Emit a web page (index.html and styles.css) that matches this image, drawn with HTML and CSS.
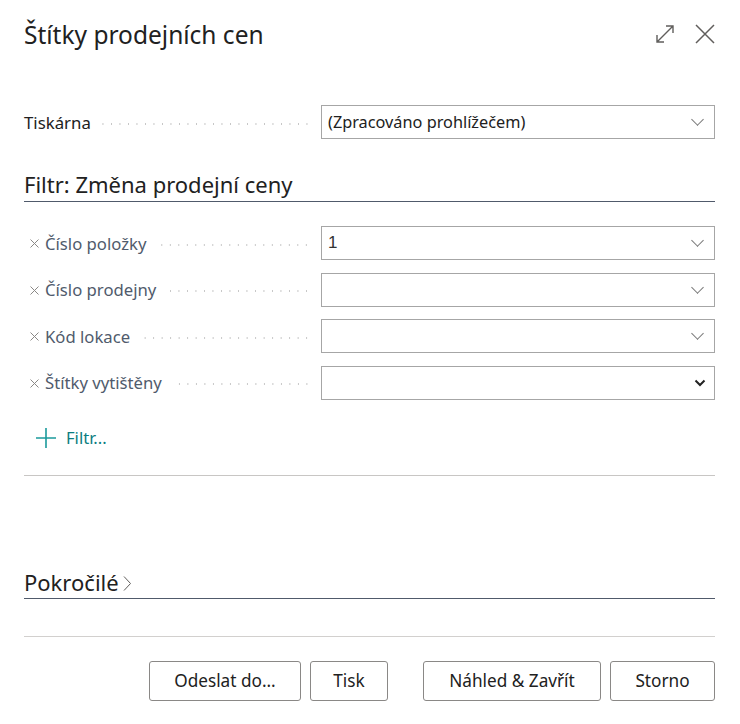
FILE: index.html
```html
<!DOCTYPE html>
<html lang="cs">
<head>
<meta charset="utf-8">
<title>Štítky prodejních cen</title>
<link rel="stylesheet" href="styles.css">
</head>
<body>
<div class="dialog">
  <header class="head">
    <h1 class="title">Štítky prodejních cen</h1>
    <div class="head-icons">
      <svg class="ico" width="22" height="22" viewBox="0 0 22 22" aria-hidden="true">
        <path d="M3 19 L19 3 M12 3 H19 V10 M3 12 V19 H10" fill="none" stroke="#605e5c" stroke-width="1.4"/>
      </svg>
      <svg class="ico" width="22" height="22" viewBox="0 0 22 22" aria-hidden="true">
        <path d="M2 2 L20 20 M20 2 L2 20" fill="none" stroke="#605e5c" stroke-width="1.5"/>
      </svg>
    </div>
  </header>

  <div class="field printer">
    <div class="label"><span class="ltext strong">Tiskárna</span><span class="dots"></span></div>
    <div class="box"><span class="val">(Zpracováno prohlížečem)</span><span class="chev"></span></div>
  </div>

  <h2 class="section">Filtr: Změna prodejní ceny</h2>

  <div class="filters">
    <div class="field">
      <div class="label"><svg class="x" width="9" height="9" viewBox="0 0 9 9" aria-hidden="true"><path d="M0.5 0.5 L8.5 8.5 M8.5 0.5 L0.5 8.5" stroke="#8a8886" stroke-width="1"/></svg><span class="ltext">Číslo položky</span><span class="dots"></span></div>
      <div class="box"><span class="val num">1</span><span class="chev"></span></div>
    </div>
    <div class="field">
      <div class="label"><svg class="x" width="9" height="9" viewBox="0 0 9 9" aria-hidden="true"><path d="M0.5 0.5 L8.5 8.5 M8.5 0.5 L0.5 8.5" stroke="#8a8886" stroke-width="1"/></svg><span class="ltext">Číslo prodejny</span><span class="dots"></span></div>
      <div class="box"><span class="val"></span><span class="chev"></span></div>
    </div>
    <div class="field">
      <div class="label"><svg class="x" width="9" height="9" viewBox="0 0 9 9" aria-hidden="true"><path d="M0.5 0.5 L8.5 8.5 M8.5 0.5 L0.5 8.5" stroke="#8a8886" stroke-width="1"/></svg><span class="ltext">Kód lokace</span><span class="dots"></span></div>
      <div class="box"><span class="val"></span><span class="chev"></span></div>
    </div>
    <div class="field">
      <div class="label"><svg class="x" width="9" height="9" viewBox="0 0 9 9" aria-hidden="true"><path d="M0.5 0.5 L8.5 8.5 M8.5 0.5 L0.5 8.5" stroke="#8a8886" stroke-width="1"/></svg><span class="ltext">Štítky vytištěny</span><span class="dots"></span></div>
      <div class="box"><span class="val"></span>
        <svg class="chev-bold" width="12" height="8" viewBox="0 0 12 8" aria-hidden="true"><path d="M1.5 1.5 L6 6 L10.5 1.5" fill="none" stroke="#222" stroke-width="2"/></svg>
      </div>
    </div>
  </div>

  <div class="addfilter">
    <svg width="22" height="22" viewBox="0 0 22 22" aria-hidden="true"><path d="M11 1 V21 M1 11 H21" stroke="#1b9a9c" stroke-width="1.6"/></svg>
    <span>Filtr...</span>
  </div>

  <div class="rule light"></div>

  <h2 class="section adv">Pokročilé<svg class="adv-chev" width="10" height="18" viewBox="0 0 10 18" aria-hidden="true"><path d="M2 2.5 L8.5 9.5 L2 16.5" fill="none" stroke="#605e5c" stroke-width="1"/></svg></h2>

  <div class="rule light foot-rule"></div>

  <div class="actions">
    <button class="btn w-send">Odeslat do...</button>
    <button class="btn w-print">Tisk</button>
    <button class="btn w-prev">Náhled &amp; Zavřít</button>
    <button class="btn w-cancel">Storno</button>
  </div>
</div>
</body>
</html>
```

FILE: styles.css
```css
* { box-sizing: border-box; }
html, body { margin: 0; padding: 0; background: #fff; }
body {
  width: 740px;
  height: 724px;
  overflow: hidden;
  font-family: "Noto Sans", "Open Sans", "Liberation Sans", sans-serif;
  color: #212121;
}
.dialog {
  padding: 0 25px 0 24px;
}
.head {
  display: flex;
  align-items: center;
  justify-content: space-between;
  height: 66px;
  padding-top: 2px;
}
.title {
  margin: 0;
  font-size: 24.5px;
  font-weight: 400;
  color: #212121;
}
.head-icons {
  display: flex;
  gap: 18px;
  align-items: center;
  margin-right: -1px;
}
.ico { display: block; }

.field {
  display: grid;
  grid-template-columns: 297px 1fr;
  height: 34px;
  align-items: center;
}
.printer { margin-top: 39px; }
.label {
  display: flex;
  align-items: center;
  height: 100%;
  padding-right: 10px;
}
.ltext {
  font-size: 16.7px;
  color: #505b6c;
  white-space: nowrap;
}
.ltext.strong { color: #212121; font-size: 16.8px; }
.x {
  display: block;
  margin: 1px 6px 0 6px;
  flex: none;
}
.dots {
  flex: 1;
  height: 2px;
  margin-left: 10px;
  margin-top: 3px;
  background-image: radial-gradient(circle, #c4c4c4 0.8px, transparent 1px);
  background-size: 8.5px 2px;
  background-repeat: repeat-x;
  background-position: right center;
}
.box {
  height: 34px;
  border: 1px solid #a6a6a6;
  display: flex;
  align-items: center;
  justify-content: space-between;
  padding: 0 9px 0 6px;
  background: #fff;
}
.val {
  font-size: 16.3px;
  color: #212121;
}
.val.num { font-family: "Liberation Sans", Arial, sans-serif; font-size: 17px; color: #333; }
.chev {
  width: 9px;
  height: 9px;
  border-right: 1px solid #777;
  border-bottom: 1px solid #777;
  transform: rotate(45deg);
  margin: -5px 3px 0 0;
}
.chev-bold { display: block; margin-right: -1px; }

.section {
  margin: 0;
  font-size: 22px;
  font-weight: 400;
  color: #212121;
  border-bottom: 1px solid #505a6b;
}
.printer + .section {
  margin-top: 31px;
  height: 32px;
  line-height: 28px;
}
.filters {
  margin-top: 24px;
  display: flex;
  flex-direction: column;
  gap: 12.6px;
}
.addfilter {
  margin-top: 27px;
  display: flex;
  align-items: center;
  gap: 9px;
  padding-left: 11px;
  height: 22px;
  color: #0b7d80;
  font-size: 16.6px;
}
.addfilter svg { display: block; }
.rule {
  height: 1px;
  background: #c8c6c4;
}
.addfilter + .rule { margin-top: 26px; }
.adv {
  margin-top: 90px;
  height: 33px;
  line-height: 30px;
  display: flex;
  align-items: center;
}
.adv-chev { margin-left: 3px; margin-top: 2px; }
.foot-rule { margin-top: 37px; background: #d2d0ce; }

.actions {
  margin-top: 24px;
  display: flex;
  justify-content: flex-end;
  gap: 9px;
}
.btn {
  height: 40px;
  border: 1px solid #8a8886;
  border-radius: 3px;
  background: #fff;
  font-family: "Noto Sans", "Open Sans", sans-serif;
  font-size: 17.2px;
  color: #212121;
  padding: 0;
}
.w-send { width: 152px; }
.w-print { width: 78px; }
.w-prev { width: 178px; margin-left: 26px; }
.w-cancel { width: 105px; }
```
